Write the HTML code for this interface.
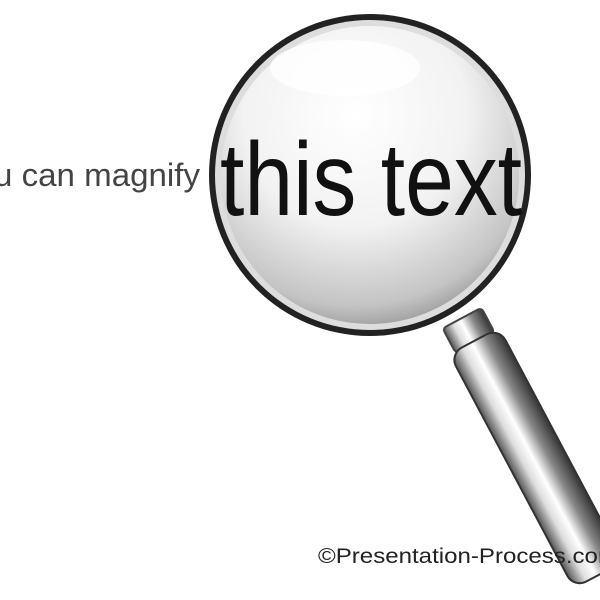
<!DOCTYPE html>
<html><head><style>
body{margin:0;width:600px;height:600px;background:#fff;overflow:hidden;position:relative;font-family:"Liberation Sans",sans-serif}
</style></head><body>
<svg width="600" height="600" style="position:absolute;left:0;top:0">
<defs>
<radialGradient id="lens" cx="0.45" cy="0.3" r="0.75">
<stop offset="0" stop-color="#ffffff"/>
<stop offset="0.5" stop-color="#f2f2f2"/>
<stop offset="0.85" stop-color="#c4c4c4"/>
<stop offset="1" stop-color="#909090"/>
</radialGradient>
<linearGradient id="metal" x1="0" y1="0" x2="1" y2="0">
<stop offset="0" stop-color="#555"/>
<stop offset="0.25" stop-color="#ddd"/>
<stop offset="0.45" stop-color="#fff"/>
<stop offset="0.7" stop-color="#888"/>
<stop offset="1" stop-color="#333"/>
</linearGradient>
</defs>
<text x="-6" y="186" font-size="32" fill="#444" textLength="206" lengthAdjust="spacingAndGlyphs">u can magnify</text>
<g transform="translate(462,318) rotate(-28)">
<rect x="-22" y="0" width="44" height="28" rx="4" fill="url(#metal)" stroke="#444" stroke-width="2"/>
<rect x="-28" y="26" width="56" height="265" rx="14" fill="url(#metal)" stroke="#333" stroke-width="2"/>
</g>
<circle cx="370" cy="175" r="161" fill="#222"/>
<circle cx="370" cy="175" r="155" fill="#ddd"/>
<circle cx="370" cy="175" r="149" fill="url(#lens)"/>
<ellipse cx="345" cy="68" rx="75" ry="28" fill="#fff" opacity="0.8"/>
<text x="220" y="215" font-size="104" fill="#111" textLength="302" lengthAdjust="spacingAndGlyphs">this text</text>
<text x="318" y="563" font-size="21" fill="#222" textLength="300" lengthAdjust="spacingAndGlyphs">©Presentation-Process.com</text>
</svg>
</body></html>
